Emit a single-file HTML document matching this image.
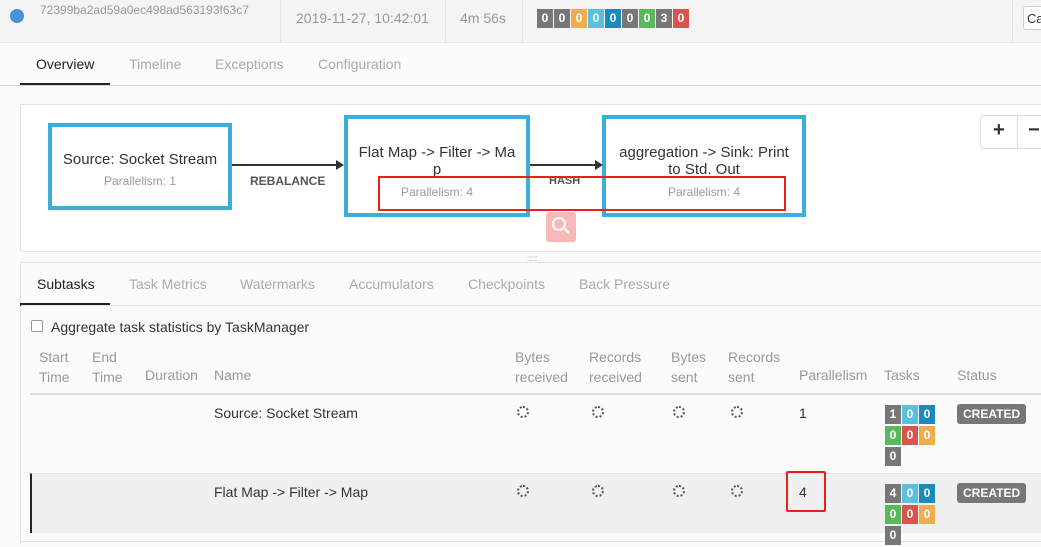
<!DOCTYPE html>
<html><head><meta charset="utf-8"><style>
*{margin:0;padding:0;box-sizing:border-box}
body{width:1041px;height:532px;overflow:hidden;background:#fbfbfb;font-family:"Liberation Sans",sans-serif;font-size:14px;color:#333;position:relative}
.a{position:absolute;white-space:nowrap}
.hd{position:absolute;left:0;top:0;width:1041px;height:43px;background:#f4f4f4;border-bottom:1px solid #e8e8e8}
.vs{position:absolute;top:0;height:43px;border-left:1px solid #e4e4e4}
.b{display:inline-block;width:16px;height:19px;color:#fff;font-size:12px;font-weight:bold;text-align:center;line-height:19px;margin-right:1px}
.node{position:absolute;border:4px solid #3ab0d8;background:#fff;text-align:center}
.g{color:#999}
.sp{position:absolute;width:12px;height:12px;border:2px dotted #555;border-radius:50%}
.t{display:inline-block;width:16px;height:19px;color:#fff;font-size:12px;font-weight:bold;text-align:center;line-height:19px;margin:0 1px 2px 0}
.cr{position:absolute;background:#777;color:#fff;font-size:12px;font-weight:bold;padding:0 6px;height:20px;line-height:20px;border-radius:3px}
</style></head><body>
<div class="hd"></div>
<div class="a" style="left:10px;top:9px;width:14px;height:14px;border-radius:50%;background:#4a90d9"></div>
<div class="a g" style="left:40px;top:3px;font-size:12px">72399ba2ad59a0ec498ad563193f63c7</div>
<div class="vs" style="left:280px"></div>
<div class="a" style="left:296px;top:10px;color:#999">2019-11-27, 10:42:01</div>
<div class="vs" style="left:445px"></div>
<div class="a" style="left:460px;top:10px;color:#999">4m 56s</div>
<div class="vs" style="left:522px"></div>
<div class="a" style="left:537px;top:9px;font-size:0">
<span class="b" style="background:#777">0</span><span class="b" style="background:#777">0</span><span class="b" style="background:#f0ad4e">0</span><span class="b" style="background:#5bc0de">0</span><span class="b" style="background:#1a8cbc">0</span><span class="b" style="background:#777">0</span><span class="b" style="background:#5cb85c">0</span><span class="b" style="background:#777">3</span><span class="b" style="background:#d9534f">0</span></div>
<div class="vs" style="left:1012px"></div>
<div class="a" style="left:1023px;top:6px;width:30px;height:24px;border:1px solid #ccc;border-radius:3px;background:#fff;padding:4px 3px;font-size:13px">Ca</div>
<div class="a" style="left:36px;top:56px;color:#222">Overview</div>
<div class="a" style="left:20px;top:83px;width:90px;height:3px;background:#222"></div>
<div class="a" style="left:129px;top:56px;color:#aaa">Timeline</div>
<div class="a" style="left:215px;top:56px;color:#aaa">Exceptions</div>
<div class="a" style="left:318px;top:56px;color:#aaa">Configuration</div>
<div class="a" style="left:0;top:85px;width:1041px;height:1px;background:#ddd"></div>
<div class="a" style="left:20px;top:104px;width:1030px;height:148px;background:#fff;border:1px solid #e4e4e4"></div>
<div class="node" style="left:48px;top:123px;width:184px;height:87px;padding-top:24px;font-size:15px">Source: Socket Stream<div class="g" style="font-size:12px;margin-top:6px">Parallelism: 1</div></div>
<div class="node" style="left:344px;top:115px;width:186px;height:102px;padding-top:25px;font-size:15px;line-height:17px">Flat Map -&gt; Filter -&gt; Ma<br>p<div class="g" style="font-size:12px;margin-top:6px">Parallelism: 4</div></div>
<div class="node" style="left:602px;top:115px;width:204px;height:102px;padding-top:25px;font-size:15px;line-height:17px">aggregation -&gt; Sink: Print<br>to Std. Out<div class="g" style="font-size:12px;margin-top:6px">Parallelism: 4</div></div>
<div class="a" style="left:232px;top:164px;width:106px;height:2px;background:#333"></div>
<div class="a" style="left:336px;top:160px;border-left:8px solid #333;border-top:5px solid transparent;border-bottom:5px solid transparent"></div>
<div class="a" style="left:530px;top:164px;width:66px;height:2px;background:#333"></div>
<div class="a" style="left:595px;top:160px;border-left:8px solid #333;border-top:5px solid transparent;border-bottom:5px solid transparent"></div>
<div class="a" style="left:250px;top:174px;font-size:12px;font-weight:bold;color:#555">REBALANCE</div>
<div class="a" style="left:549px;top:175px;font-size:11px;font-weight:bold;color:#555">HASH</div>
<div class="a" style="left:378px;top:176px;width:408px;height:35px;border:2px solid #e8201a"></div>
<div class="a" style="left:546px;top:212px;width:30px;height:30px;background:#f8b8b8;border-radius:3px"></div>
<div class="a" style="left:552px;top:217px;width:14px;height:14px;border:2px solid #fff;border-radius:50%"></div>
<div class="a" style="left:564px;top:230px;width:6px;height:2px;background:#fff;transform:rotate(45deg)"></div>
<div class="a" style="left:980px;top:115px;width:70px;height:34px;border:1px solid #ddd;border-radius:4px;background:#fff"></div>
<div class="a" style="left:993px;top:119px;font-size:20px;font-weight:bold">+</div>
<div class="a" style="left:1017px;top:116px;width:1px;height:32px;background:#ddd"></div>
<div class="a" style="left:1028px;top:119px;font-size:20px;font-weight:bold">−</div>
<div class="a" style="left:527px;top:254px;font-size:8px;color:#bbb;letter-spacing:-1px">::::::::</div>
<div class="a" style="left:20px;top:262px;width:1030px;height:280px;border:1px solid #e4e4e4;background:#fbfbfb"></div>
<div class="a" style="left:37px;top:276px;color:#222">Subtasks</div>
<div class="a" style="left:20px;top:303px;width:90px;height:3px;background:#222"></div>
<div class="a" style="left:129px;top:276px;color:#aaa">Task Metrics</div>
<div class="a" style="left:240px;top:276px;color:#aaa">Watermarks</div>
<div class="a" style="left:349px;top:276px;color:#aaa">Accumulators</div>
<div class="a" style="left:468px;top:276px;color:#aaa">Checkpoints</div>
<div class="a" style="left:579px;top:276px;color:#aaa">Back Pressure</div>
<div class="a" style="left:21px;top:305px;width:1030px;height:1px;background:#e4e4e4"></div>
<div class="a" style="left:31px;top:320px;width:12px;height:12px;border:1px solid #999;border-radius:2px;background:#fff"></div>
<div class="a" style="left:51px;top:319px;color:#333">Aggregate task statistics by TaskManager</div>
<div class="a g" style="left:39px;top:347px;line-height:20px">Start<br>Time</div>
<div class="a g" style="left:92px;top:347px;line-height:20px">End<br>Time</div>
<div class="a g" style="left:145px;top:367px">Duration</div>
<div class="a g" style="left:214px;top:367px">Name</div>
<div class="a g" style="left:515px;top:347px;line-height:20px">Bytes<br>received</div>
<div class="a g" style="left:589px;top:347px;line-height:20px">Records<br>received</div>
<div class="a g" style="left:671px;top:347px;line-height:20px">Bytes<br>sent</div>
<div class="a g" style="left:728px;top:347px;line-height:20px">Records<br>sent</div>
<div class="a g" style="left:799px;top:367px">Parallelism</div>
<div class="a g" style="left:884px;top:367px">Tasks</div>
<div class="a g" style="left:957px;top:367px">Status</div>
<div class="a" style="left:30px;top:393px;width:1011px;height:2px;background:#ddd"></div>
<div class="a" style="left:214px;top:405px">Source: Socket Stream</div>
<div class="sp" style="left:517px;top:406px"></div><div class="sp" style="left:592px;top:406px"></div><div class="sp" style="left:673px;top:406px"></div><div class="sp" style="left:731px;top:406px"></div>
<div class="a" style="left:799px;top:405px">1</div>
<div class="a" style="left:885px;top:405px;width:54px;font-size:0;white-space:normal"><span class="t" style="background:#777">1</span><span class="t" style="background:#5bc0de">0</span><span class="t" style="background:#1a8cbc">0</span><span class="t" style="background:#5cb85c">0</span><span class="t" style="background:#d9534f">0</span><span class="t" style="background:#f0ad4e">0</span><span class="t" style="background:#777">0</span></div>
<div class="cr" style="left:957px;top:404px">CREATED</div>
<div class="a" style="left:30px;top:473px;width:1011px;height:60px;background:#f0f0f0;border-top:1px solid #e0e0e0;border-left:2px solid #222"></div>
<div class="a" style="left:214px;top:484px">Flat Map -&gt; Filter -&gt; Map</div>
<div class="sp" style="left:517px;top:485px"></div><div class="sp" style="left:592px;top:485px"></div><div class="sp" style="left:673px;top:485px"></div><div class="sp" style="left:731px;top:485px"></div>
<div class="a" style="left:799px;top:484px">4</div>
<div class="a" style="left:786px;top:471px;width:40px;height:41px;border:2px solid #e8201a;border-radius:2px"></div>
<div class="a" style="left:885px;top:484px;width:54px;font-size:0;white-space:normal"><span class="t" style="background:#777">4</span><span class="t" style="background:#5bc0de">0</span><span class="t" style="background:#1a8cbc">0</span><span class="t" style="background:#5cb85c">0</span><span class="t" style="background:#d9534f">0</span><span class="t" style="background:#f0ad4e">0</span><span class="t" style="background:#777">0</span></div>
<div class="cr" style="left:957px;top:483px">CREATED</div>
</body></html>
